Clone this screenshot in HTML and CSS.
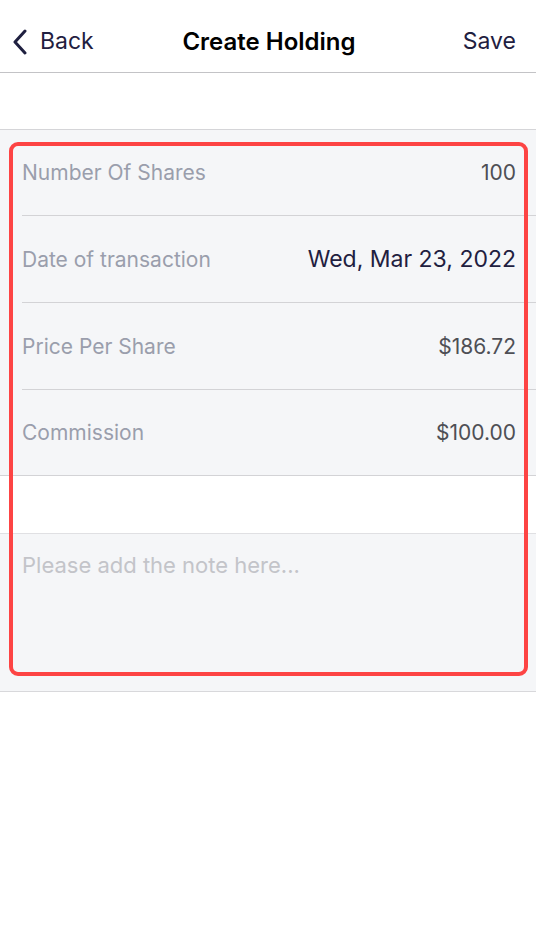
FILE: index.html
```html
<!DOCTYPE html>
<html>
<head>
  <title>Create Holding</title>
  <link rel="stylesheet" href="styles.css">
</head>
<body>
  <header class="navbar">
    <a class="nav-back">
      <svg width="16" height="26" viewBox="0 0 16 26"><path d="M13 2 L3 13 L13 24" fill="none" stroke="#1f2040" stroke-width="3" stroke-linecap="round" stroke-linejoin="round"/></svg>
      <span>Back</span>
    </a>
    <h1 class="nav-title">Create Holding</h1>
    <a class="nav-save">Save</a>
  </header>

  <div class="spacer"></div>

  <section class="form">
    <div class="row">
      <span class="label">Number Of Shares</span>
      <span class="value">100</span>
    </div>
    <div class="row">
      <span class="label">Date of transaction</span>
      <span class="value date">Wed, Mar 23, 2022</span>
    </div>
    <div class="row">
      <span class="label">Price Per Share</span>
      <span class="value">$186.72</span>
    </div>
    <div class="row">
      <span class="label">Commission</span>
      <span class="value">$100.00</span>
    </div>
  </section>

  <div class="gap"></div>

  <section class="note">
    <span class="placeholder">Please add the note here...</span>
  </section>

  <div class="highlight"></div>
</body>
</html>
```

FILE: styles.css
```css
html {
  background-color: #fff;
}

body {
  margin: 0;
  font-family: Inter, "Noto Sans", sans-serif;
  position: relative;
  min-height: 932px;
}

a {
  color: #1f2040;
  text-decoration: none;
}

.navbar {
  height: 62px;
  padding: 10px 20px 0 12px;
  border-bottom: 1px solid #c3c3c6;
  display: flex;
  align-items: center;
  justify-content: space-between;
}

.nav-back {
  display: flex;
  align-items: center;
  gap: 12px;
  font-size: 23px;
  width: 130px;
}

.nav-back svg {
  margin-top: 1px;
}

.nav-title {
  margin: 0;
  font-size: 24px;
  font-weight: 600;
  color: #000;
}

.nav-save {
  font-size: 23px;
  width: 120px;
  text-align: right;
}

.spacer {
  height: 56px;
  border-bottom: 1px solid #d5d5d8;
}

.form {
  background-color: #f5f6f8;
  padding-left: 22px;
  border-bottom: 1px solid #d3d3d6;
}

.row {
  height: 86px;
  display: flex;
  align-items: center;
  justify-content: space-between;
  padding-right: 20px;
  border-bottom: 1px solid #d3d3d6;
}

.row:first-child {
  height: 85px;
}

.row:last-child {
  height: 85px;
  border-bottom: none;
}

.label {
  font-size: 21px;
  color: #9a9eac;
}

.value {
  font-size: 21px;
  color: #4e4f55;
}

.value.date {
  font-size: 23px;
  color: #1f2040;
}

.gap {
  height: 57px;
  border-bottom: 1px solid #e0e0e3;
}

.note {
  background-color: #f5f6f8;
  height: 139px;
  padding: 18px 22px 0;
  border-bottom: 1px solid #d8d8db;
}

.placeholder {
  font-size: 22px;
  color: #c3c4c9;
}

.highlight {
  position: absolute;
  left: 9px;
  top: 142px;
  width: 511px;
  height: 526px;
  border: 4px solid #fd4444;
  border-radius: 9px;
}
```
